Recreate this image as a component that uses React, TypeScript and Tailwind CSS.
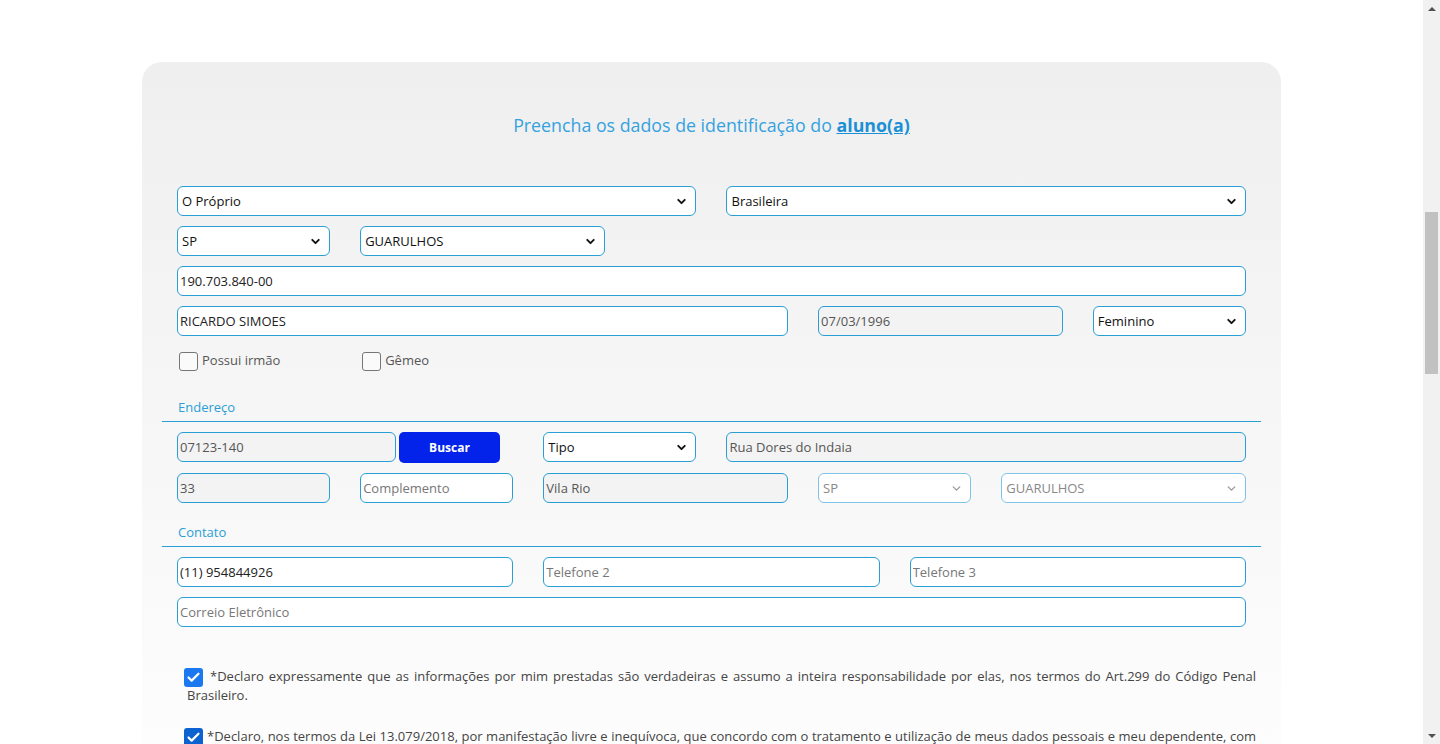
import { ChevronDown, Check } from 'lucide-react';

const font = { fontFamily: '"Open Sans", "Noto Sans", sans-serif' };

const inputBase =
  'h-[30px] w-full rounded-[6px] border border-[#2a9fd6] px-[2px] text-[13px] text-[#222] outline-none placeholder:text-[#777]';

function Field({ value, placeholder, disabled }: { value?: string; placeholder?: string; disabled?: boolean }) {
  return (
    <input
      readOnly
      value={value ?? ''}
      placeholder={placeholder}
      className={`${inputBase} ${disabled ? 'bg-[#f3f3f3] text-[#555]' : 'bg-white'}`}
    />
  );
}

function Select({ value, disabled }: { value: string; disabled?: boolean }) {
  return (
    <div className="relative w-full">
      <select
        disabled={disabled}
        defaultValue={value}
        className={`h-[30px] w-full appearance-none rounded-[6px] border px-[4px] pt-[1px] text-[13px] outline-none ${
          disabled ? 'border-[#7fc3e8] bg-white text-[#888]' : 'border-[#2a9fd6] bg-white text-[#111]'
        }`}
      >
        <option>{value}</option>
      </select>
      <ChevronDown
        size={13}
        strokeWidth={disabled ? 2.5 : 3.5}
        className={`pointer-events-none absolute right-[8px] top-[9px] ${disabled ? 'text-[#9a9a9a]' : 'text-[#111]'}`}
      />
    </div>
  );
}

function Box({ checked, dark }: { checked?: boolean; dark?: boolean }) {
  if (checked) {
    return (
      <span
        className={`inline-flex h-[19px] w-[19px] shrink-0 items-center justify-center rounded-[3px] align-[-4px] ${
          dark ? 'bg-[#0d62d2]' : 'bg-[#1a78f0]'
        }`}
      >
        <Check size={15} strokeWidth={3.5} className="text-white" />
      </span>
    );
  }
  return <span className="inline-block h-[19px] w-[19px] shrink-0 rounded-[3px] border border-[#767676] bg-[#fafafa]" />;
}

function Section({ title }: { title: string }) {
  return (
    <div className="border-b border-[#2a9fd6] px-[16px] pb-[5px] text-[13px] leading-[18px] text-[#2a9fd6]">{title}</div>
  );
}

function Scrollbar() {
  return (
    <aside className="flex h-[744px] w-[17px] shrink-0 flex-col items-center bg-[#f1f1f1]">
      <div className="flex h-[17px] items-center justify-center">
        <span className="h-0 w-0 border-x-[4px] border-b-[4px] border-x-transparent border-b-[#505050]" />
      </div>
      <div className="mt-[195px] h-[162px] w-[13px] bg-[#c1c1c1]" />
      <div className="flex-1" />
      <div className="flex h-[17px] items-center justify-center">
        <span className="h-0 w-0 border-x-[4px] border-t-[4px] border-x-transparent border-t-[#505050]" />
      </div>
    </aside>
  );
}

export default function App() {
  return (
    <div className="flex h-[744px] w-full overflow-hidden bg-white" style={font}>
      <main className="min-w-0 flex-1 overflow-hidden pt-[62px]">
        <div className="mx-auto w-[1139px] rounded-[20px] bg-gradient-to-b from-[#efefef] via-[#f7f7f7] to-white px-[20px] pb-[80px]">
          <h1 className="pt-[51px] text-center text-[17.8px] leading-[25px] text-[#35a2e0]">
            Preencha os dados de identificação do{' '}
            <a className="font-bold text-[#1b90d6] underline">aluno(a)</a>
          </h1>

          <div className="mt-[48px] px-[15px]">
            <div className="grid grid-cols-12 gap-x-[30px] gap-y-[10px]">
              <div className="col-span-6">
                <Select value="O Próprio" />
              </div>
              <div className="col-span-6">
                <Select value="Brasileira" />
              </div>
              <div className="col-span-2">
                <Select value="SP" />
              </div>
              <div className="col-span-3">
                <Select value="GUARULHOS" />
              </div>
              <div className="col-span-7" />
              <div className="col-span-12">
                <Field value="190.703.840-00" />
              </div>
              <div className="col-span-7">
                <Field value="RICARDO SIMOES" />
              </div>
              <div className="col-span-3">
                <Field value="07/03/1996" disabled />
              </div>
              <div className="col-span-2">
                <Select value="Feminino" />
              </div>
              <div className="col-span-2 flex h-[30px] items-center gap-[4px] pl-[2px] text-[13px] text-[#555]">
                <Box />
                <span>Possui irmão</span>
              </div>
              <div className="col-span-2 flex h-[30px] items-center gap-[4px] pl-[2px] text-[13px] text-[#555]">
                <Box />
                <span>Gêmeo</span>
              </div>
            </div>
          </div>

          <div className="mt-[22px]">
            <Section title="Endereço" />
          </div>
          <div className="mt-[10px] px-[15px]">
            <div className="grid grid-cols-12 gap-x-[30px] gap-y-[10px]">
              <div className="col-span-4 flex items-start gap-[3px]">
                <div className="w-[219px]">
                  <Field value="07123-140" disabled />
                </div>
                <button className="h-[31px] w-[101px] rounded-[5px] bg-[#0322ea] text-[12px] font-bold text-white">
                  Buscar
                </button>
              </div>
              <div className="col-span-2">
                <Select value="Tipo" />
              </div>
              <div className="col-span-6">
                <Field value="Rua Dores do Indaia" disabled />
              </div>
              <div className="col-span-2">
                <Field value="33" disabled />
              </div>
              <div className="col-span-2">
                <Field placeholder="Complemento" />
              </div>
              <div className="col-span-3">
                <Field value="Vila Rio" disabled />
              </div>
              <div className="col-span-2">
                <Select value="SP" disabled />
              </div>
              <div className="col-span-3">
                <Select value="GUARULHOS" disabled />
              </div>
            </div>
          </div>

          <div className="mt-[20px]">
            <Section title="Contato" />
          </div>
          <div className="mt-[10px] px-[15px]">
            <div className="grid grid-cols-12 gap-x-[30px] gap-y-[10px]">
              <div className="col-span-4">
                <Field value="(11) 954844926" />
              </div>
              <div className="col-span-4">
                <Field placeholder="Telefone 2" />
              </div>
              <div className="col-span-4">
                <Field placeholder="Telefone 3" />
              </div>
              <div className="col-span-12">
                <Field placeholder="Correio Eletrônico" />
              </div>
            </div>
          </div>

          <div className="ml-[25px] mr-[5px] mt-[41px] text-justify text-[13px] leading-[17px] text-[#444]">
            <p>
              <span className="ml-[-3px] mr-[7px]">
                <Box checked />
              </span>
              *Declaro expressamente que as informações por mim prestadas são verdadeiras e assumo a inteira
              responsabilidade por elas, nos termos do Art.299 do Código Penal Brasileiro.
            </p>
            <p className="mt-[24px]">
              <span className="ml-[-3px] mr-[4px]">
                <Box checked dark />
              </span>
              *Declaro, nos termos da Lei 13.079/2018, por manifestação livre e inequívoca, que concordo com o tratamento e
              utilização de meus dados pessoais e meu dependente, com a finalidade de viabilizar a matrícula e a prestação
              dos serviços educacionais.
            </p>
          </div>
        </div>
      </main>
      <Scrollbar />
    </div>
  );
}
